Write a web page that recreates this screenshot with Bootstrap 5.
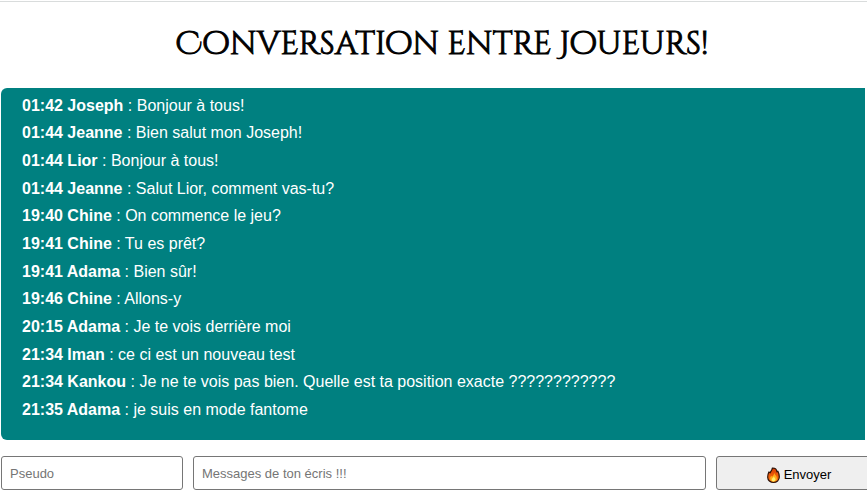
<!DOCTYPE html>
<html lang="fr">
<head>
<meta charset="utf-8">
<meta name="viewport" content="width=device-width, initial-scale=1">
<title>Conversation entre Joueurs!</title>
<link href="https://cdn.jsdelivr.net/npm/bootstrap@5.3.0/dist/css/bootstrap.min.css" rel="stylesheet">
<style>
body { font-family: "Liberation Sans", Arial, sans-serif; font-size: 16px; color: #000; }
.chat-page { border-top: 1px solid #d9dcdc; margin-top: 1px; padding-left: 1px; }
.chat-title { font-family: "Cinzel Decorative", Cinzel, "Liberation Serif", serif; font-size: 32px; line-height: 40px; padding: 23px 0; margin-right: -16px; -webkit-text-stroke: 1px #000; }
.chat-log { background: #008080; color: #fff; border-radius: 6px 0 0 6px; margin-right: 2px; padding: 4px 20px 16px 21px; }
.chat-lines { min-height: 332px; line-height: 24px; }
.chat-form { gap: 10px; margin-right: -15px; padding-top: 16px; font-size: 13px; }
.chat-field, .chat-send { height: 34px; border: 1px solid #767676; border-radius: 3px; font-size: inherit; color: #000; }
.chat-field { padding: 0 8px; background: #fff; min-width: 0; }
.chat-field::placeholder { color: #757575; opacity: 1; }
.chat-name { flex: 0 0 182px; }
.chat-send { flex: 0 0 166px; background: #efefef; gap: 4px; padding-top: 4px; }
</style>
<script src="https://cdn.jsdelivr.net/npm/bootstrap@5.3.0/dist/js/bootstrap.bundle.min.js" defer></script>
</head>
<body>
<main class="chat-page overflow-hidden">
  <h1 class="chat-title text-center fw-normal mb-0">Conversation entre Joueurs!</h1>
  <section class="chat-log">
    <ul class="chat-lines list-unstyled d-flex flex-column justify-content-around mb-0">
      <li><strong>01:42 Joseph</strong> : Bonjour à tous!</li>
      <li><strong>01:44 Jeanne</strong> : Bien salut mon Joseph!</li>
      <li><strong>01:44 Lior</strong> : Bonjour à tous!</li>
      <li><strong>01:44 Jeanne</strong> : Salut Lior, comment vas-tu?</li>
      <li><strong>19:40 Chine</strong> : On commence le jeu?</li>
      <li><strong>19:41 Chine</strong> : Tu es prêt?</li>
      <li><strong>19:41 Adama</strong> : Bien sûr!</li>
      <li><strong>19:46 Chine</strong> : Allons-y</li>
      <li><strong>20:15 Adama</strong> : Je te vois derrière moi</li>
      <li><strong>21:34 Iman</strong> : ce ci est un nouveau test</li>
      <li><strong>21:34 Kankou</strong> : Je ne te vois pas bien. Quelle est ta position exacte ????????????</li>
      <li><strong>21:35 Adama</strong> : je suis en mode fantome</li>
    </ul>
  </section>
  <form class="chat-form d-flex">
    <input class="chat-field chat-name" type="text" placeholder="Pseudo" aria-label="Pseudo">
    <input class="chat-field flex-fill" type="text" placeholder="Messages de ton écris !!!" aria-label="Message">
    <button class="chat-send d-flex align-items-center justify-content-center" type="button">
      <svg width="13" height="16" viewBox="0 0 13 16" aria-hidden="true">
        <defs>
          <linearGradient id="flame" x1="0" y1="0" x2="0" y2="1">
            <stop offset="0" stop-color="#d83b01"/><stop offset="1" stop-color="#ff7a12"/>
          </linearGradient>
        </defs>
        <path d="M5.300 1C8 .9 9.700 2.400 9.900 4.800L10.900 4.200C11.900 6 12.300 8 12.300 10C12.200 13.300 9.700 15.400 6.500 15.400S.7 13.200.7 10.200C.7 8 1.100 6.500 1.900 5L3.200 5.800C3.500 4 5.400 3.200 5.300 1Z" fill="url(#flame)" stroke="#2b1005" stroke-width="1.200" stroke-linejoin="round"/>
        <path d="M7.200 5.800C7.300 7.500 9.900 8.800 9.900 11.300C9.900 13.400 8.400 14.600 6.600 14.600S3.200 13.400 3.200 11.500C3.200 10.300 3.700 9.500 4.300 8.900L5.100 9.800C6.300 8.800 7.100 7.500 7.200 5.800Z" fill="#ffae19"/>
        <path d="M6.900 9.300C7.100 10.700 8.600 11.200 8.500 12.600C8.400 13.700 7.600 14.400 6.600 14.400S4.700 13.700 4.700 12.700C4.700 11.300 6.600 10.900 6.900 9.300Z" fill="#ffec70"/>
      </svg>
      <span>Envoyer</span>
    </button>
  </form>
</main>
</body>
</html>
